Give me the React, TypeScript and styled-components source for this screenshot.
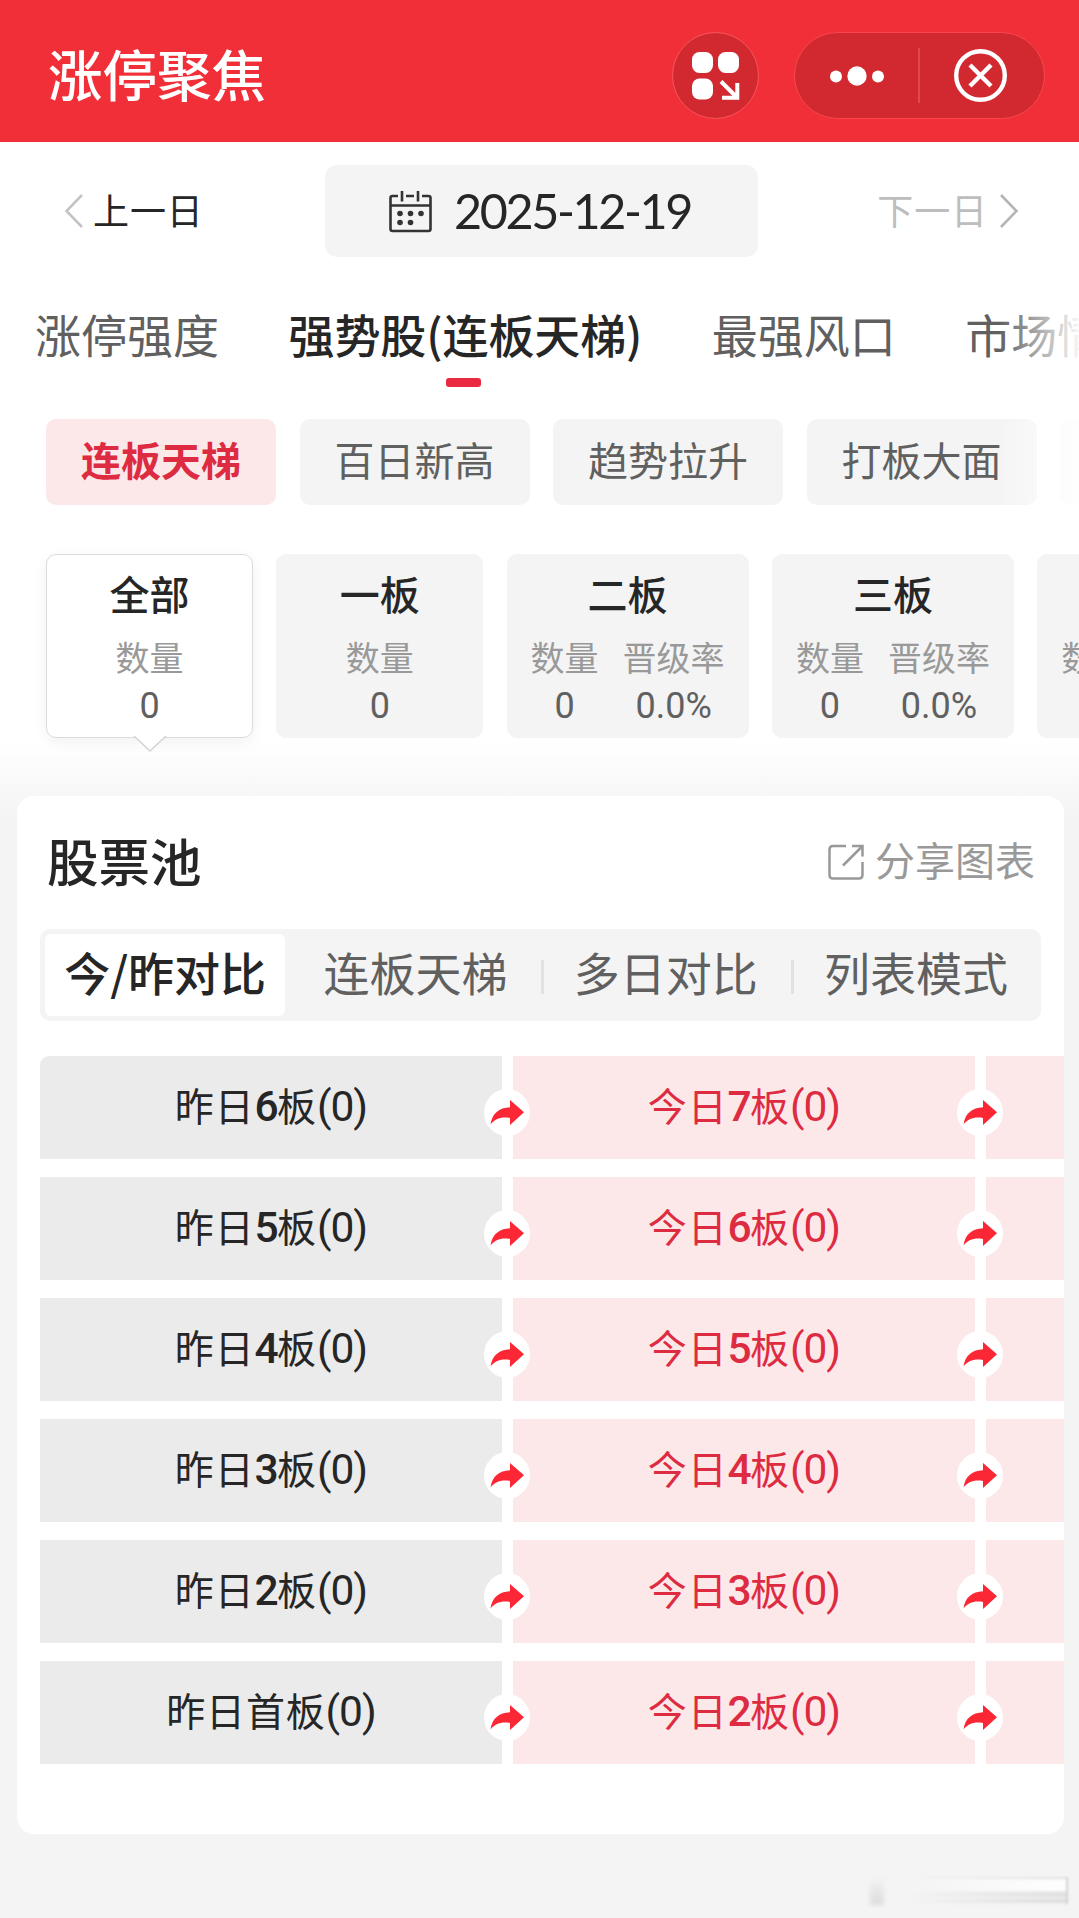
import React from "react";
import styled, { createGlobalStyle, css } from "styled-components";

const cjk = `"Noto Sans CJK SC", sans-serif`;
const numeric = `Roboto, "Noto Sans CJK SC", sans-serif`;

const GlobalStyle = createGlobalStyle`
  * { box-sizing: border-box; }
  body {
    margin: 0;
    background: #f4f4f4;
    font-family: ${cjk};
    color: #262626;
    overflow: hidden;
  }
`;

const Page = styled.div`
  position: relative;
  width: 1079px;
  height: 1918px;
  overflow: hidden;
  background: #f4f4f4;
`;

const Header = styled.header`
  height: 142px;
  padding: 0 34px 0 48px;
  background: #f12f38;
  display: flex;
  align-items: center;
`;

const AppTitle = styled.h1`
  flex: 1;
  margin: 3px 0 0;
  font-size: 54.5px;
  line-height: 80px;
  font-weight: 500;
  color: #fff;
  white-space: nowrap;
`;

const RoundButton = styled.div`
  width: 87px;
  height: 87px;
  margin: 9px 35px 0 0;
  border-radius: 44px;
  border: 1.5px solid #fa545b;
  background: #d1292f;
  display: flex;
  align-items: center;
  justify-content: center;
`;

const Capsule = styled.div`
  width: 251px;
  height: 87px;
  margin-top: 9px;
  border-radius: 44px;
  border: 1.5px solid #f9464e;
  background: #d1292f;
  display: flex;
  align-items: center;
`;

const CapsulePart = styled.div<{ $width: number }>`
  width: ${(p) => p.$width}px;
  display: flex;
  justify-content: center;
`;

const CapsuleDivider = styled.div`
  width: 1.5px;
  height: 55px;
  background: #e3474d;
`;

const Top = styled.section`
  height: 678px;
  background: linear-gradient(#fff 0, #fff 598px, #f4f4f4 678px);
`;

const DateRow = styled.div`
  display: flex;
  align-items: center;
  padding: 23px 60px 0 64px;
  height: 115px;
`;

const DayLink = styled.div<{ $muted?: boolean }>`
  width: 261px;
  flex: none;
  display: flex;
  align-items: center;
  justify-content: ${(p) => (p.$muted ? "flex-end" : "flex-start")};
  gap: ${(p) => (p.$muted ? 11 : 9)}px;
  color: ${(p) => (p.$muted ? "#bdbdbd" : "#262626")};
  font-size: 36px;
  letter-spacing: 0.9px;
  line-height: 50px;
  white-space: nowrap;
  span { margin-top: -4px; }
`;

const DateButton = styled.div`
  flex: none;
  width: 433px;
  height: 92px;
  border-radius: 12px;
  background: #f4f4f4;
  display: flex;
  align-items: center;
  padding-left: 64px;
  gap: 22px;
`;

const DateText = styled.span`
  font-family: Lato, sans-serif;
  font-size: 48.5px;
  letter-spacing: -2.4px;
  line-height: 60px;
  margin-top: -2px;
`;

const DateDash = styled.span`
  display: inline-block;
  width: 23px;
  height: 3.5px;
  margin: 0 2px 0 4px;
  vertical-align: 15px;
`;

const Strip = styled.div<{ $fade?: boolean }>`
  position: relative;
  overflow: hidden;
  display: flex;
  ${(p) =>
    p.$fade &&
    css`
      &::after {
        content: "";
        position: absolute;
        top: 0;
        right: 0;
        bottom: 0;
        width: 80px;
        background: linear-gradient(90deg, rgba(255, 255, 255, 0), rgba(255, 255, 255, 0.95));
      }
    `}
`;

const TabStrip = styled(Strip)`
  height: 130px;
  padding: 42px 0 0 35px;
  gap: 69.5px;
`;

const Tab = styled.div<{ $active?: boolean }>`
  flex: none;
  display: flex;
  flex-direction: column;
  align-items: center;
  font-size: 46px;
  line-height: 68px;
  letter-spacing: ${(p) => (p.$active ? "-0.1px" : "0")};
  white-space: nowrap;
  color: ${(p) => (p.$active ? "#262626" : "#606060")};
  font-weight: ${(p) => (p.$active ? 500 : 400)};
`;

const Underline = styled.i`
  width: 35px;
  height: 9px;
  margin: 11px 3px 0 0;
  border-radius: 3px;
  background: #e92a40;
`;

const ChipStrip = styled(Strip)`
  height: 118px;
  padding: 32px 0 0 46px;
  gap: 23.5px;
`;

const Chip = styled.div<{ $active?: boolean }>`
  flex: none;
  width: 230px;
  height: 86px;
  border-radius: 10px;
  text-align: center;
  font-size: 40px;
  line-height: 80px;
  background: ${(p) => (p.$active ? "#fde8e9" : "#f4f4f4")};
  color: ${(p) => (p.$active ? "#dd2c42" : "#606060")};
  font-weight: ${(p) => (p.$active ? 600 : 400)};
`;

const LevelStrip = styled(Strip)`
  height: 255px;
  padding: 49px 0 0 46px;
  gap: 23.3px;
`;

const Level = styled.div<{ $active?: boolean; $wide?: boolean }>`
  position: relative;
  flex: none;
  width: ${(p) => (p.$wide ? 242 : 207)}px;
  height: 184px;
  border-radius: 10px;
  background: ${(p) => (p.$active ? "#fff" : "#f4f4f4")};
  border: 1px solid ${(p) => (p.$active ? "#dcdcdc" : "#f4f4f4")};
  box-shadow: ${(p) => (p.$active ? "0 4px 14px rgba(0, 0, 0, 0.06)" : "none")};
  display: flex;
  flex-direction: column;
  align-items: center;
`;

const Pointer = styled.svg`
  position: absolute;
  left: 86px;
  top: 180px;
`;

const LevelName = styled.div`
  margin-top: 8px;
  font-size: 40px;
  line-height: 60px;
  font-weight: 500;
`;

const Metrics = styled.div`
  display: flex;
  gap: 24px;
`;

const Metric = styled.div`
  display: flex;
  flex-direction: column;
  align-items: center;
`;

const MetricLabel = styled.span`
  font-size: 34px;
  line-height: 50px;
  margin-top: 9px;
  color: #999;
  white-space: nowrap;
`;

const MetricValue = styled.span`
  font-family: ${numeric};
  font-size: 36px;
  line-height: 42px;
  margin-top: 3px;
  color: #606060;
`;

const Panel = styled.section`
  margin: -24.5px 15px 0 17px;
  height: 1038.5px;
  border-radius: 17px;
  background: #fff;
  overflow: hidden;
`;

const PanelHead = styled.div`
  display: flex;
  justify-content: space-between;
  align-items: center;
  height: 133.5px;
  padding: 0 29px 0 30px;
`;

const PanelTitle = styled.h2`
  margin: 0 0 4px;
  font-size: 51.5px;
  line-height: 76px;
  font-weight: 500;
`;

const Share = styled.div`
  display: flex;
  align-items: center;
  gap: 11px;
  color: #999;
  font-size: 40px;
  line-height: 60px;
  span { margin-top: -7px; }
`;

const Segments = styled.div`
  margin: 0 23px;
  height: 92px;
  border-radius: 10px;
  background: #f4f4f4;
  display: grid;
  grid-template-columns: repeat(4, 1fr);
  align-items: center;
`;

const Segment = styled.div<{ $active?: boolean }>`
  height: 82px;
  margin: 0 ${(p) => (p.$active ? 5 : 0)}px;
  border-radius: 6px;
  display: flex;
  align-items: center;
  justify-content: center;
  padding-bottom: 8px;
  font-size: 46px;
  line-height: 68px;
  white-space: nowrap;
  background: ${(p) => (p.$active ? "#fff" : "transparent")};
  color: ${(p) => (p.$active ? "#262626" : "#606060")};
  font-weight: ${(p) => (p.$active ? 500 : 400)};
  position: relative;
`;

const SegmentRule = styled.i`
  position: absolute;
  left: 0;
  top: 26px;
  width: 3px;
  height: 34px;
  background: #e2e2e2;
`;

const Ladder = styled.div`
  margin: 35px 0 0 23px;
  display: grid;
  row-gap: 18px;
`;

const LadderRow = styled.div`
  display: grid;
  grid-template-columns: 462px 462px 462px;
  column-gap: 11px;
  height: 103px;
  &:first-child > :first-child { border-top-left-radius: 9px; }
`;

const Cell = styled.div<{ $today?: boolean }>`
  position: relative;
  display: flex;
  align-items: center;
  justify-content: center;
  padding-bottom: 5px;
  font-size: 39px;
  letter-spacing: 0.8px;
  line-height: 60px;
  white-space: nowrap;
  background: ${(p) => (p.$today ? "#fde8e9" : "#ebebeb")};
  color: ${(p) => (p.$today ? "#dd2c42" : "#262626")};
`;

const Num = styled.span<{ $light?: boolean }>`
  font-family: ${numeric};
  font-size: 42.5px;
  font-weight: ${(p) => (p.$light ? 400 : 500)};
  letter-spacing: ${(p) => (p.$light ? "-1px" : "-1.5px")};
`;

const Jump = styled.div`
  position: absolute;
  z-index: 1;
  right: -28px;
  top: 33px;
  width: 46px;
  height: 47px;
  border-radius: 50%;
  background: #fff;
  display: flex;
  align-items: center;
  justify-content: center;
`;

const Watermark = styled.div`
  position: absolute;
  right: 11px;
  bottom: 11px;
  width: 198px;
  height: 30px;
  display: flex;
  gap: 8px;
`;

const Smudge = styled.i`
  width: 14px;
  height: 28px;
  background: linear-gradient(rgba(220, 220, 220, 0), #dcdcdc);
  filter: blur(2px);
`;

const SmudgeBar = styled.i`
  flex: 1;
  height: 27px;
  border-right: 2px solid #d4d4d4;
  background:
    linear-gradient(90deg, #f4f4f4 10%, rgba(244, 244, 244, 0.1) 100%),
    linear-gradient(#dedede 0 1px, #fff 3px 13px, #ddd 16px 19px, #eee 21px, #d2d2d2 24px, #f4f4f4 27px);
  filter: blur(0.8px);
`;

const Chevron = ({ right }: { right?: boolean }) => (
  <svg width="20" height="36" viewBox="0 0 20 36" fill="none" stroke={right ? "#b5b5b5" : "#c4c4c4"} strokeWidth="2.6">
    <path d={right ? "M2 2 17.5 18 2 34" : "M18 2 2.5 18 18 34"} />
  </svg>
);

const GridIcon = () => (
  <svg width="48" height="48" viewBox="0 0 48 48" fill="#fff">
    <rect x="0" y="0" width="21" height="21" rx="7.5" />
    <rect x="26" y="0" width="21" height="21" rx="7.5" />
    <rect x="0" y="26.5" width="21" height="21" rx="7.5" />
    <path d="M29 29.5 45 45.5M45.3 31v14.8H30" fill="none" stroke="#fff" strokeWidth="4" />
  </svg>
);

const DotsIcon = () => (
  <svg width="56" height="20" viewBox="0 0 56 20" fill="#fff">
    <circle cx="7" cy="10.5" r="6" />
    <circle cx="28" cy="10" r="9.7" />
    <circle cx="49" cy="10.5" r="6" />
  </svg>
);

const CloseIcon = () => (
  <svg width="54" height="54" viewBox="0 0 54 54" fill="none" stroke="#fff">
    <circle cx="27.5" cy="26.5" r="24.3" strokeWidth="4.4" />
    <path d="M17 16 38 37M38 16 17 37" strokeWidth="4.4" />
  </svg>
);

const CalendarIcon = () => (
  <svg width="43" height="43" viewBox="0 0 43 43" fill="none" stroke="#333" strokeWidth="2.6">
    <path d="M9 6H3.5Q1.5 6 1.5 8V39q0 2 2 2h36q2 0 2-2V8q0-2-2-2H33M17 6h8M1.5 15.5h40M13 1v10.500M29 1v10.500" />
    <g fill="#333" stroke="none">
      <circle cx="11" cy="23.500" r="2.800" />
      <circle cx="21.500" cy="23.500" r="2.800" />
      <circle cx="32" cy="23.500" r="2.800" />
      <circle cx="11" cy="32.500" r="2.800" />
      <circle cx="21.500" cy="32.500" r="2.800" />
    </g>
  </svg>
);

const ShareIcon = () => (
  <svg width="36" height="36" viewBox="0 0 36 36" fill="none" stroke="#999" strokeWidth="2.5">
    <path d="M18 2H5Q1.500 2 1.500 5.500V31q0 3.500 3.500 3.500H31q3.500 0 3.500-3.500V18M24 2h10.500v10.500M34 2.500 15 21.500" />
  </svg>
);

const JumpArrow = () => (
  <svg width="34" height="26" viewBox="0 0 34 26" fill="#fb2735">
    <path d="M20 0 34 12.300 20 25V18C11 16.500 5 19 .500 24.500 2 13.500 9 7.500 20 7.200Z" />
  </svg>
);

const levels = [
  { name: "全部", active: true },
  { name: "一板" },
  { name: "二板", rate: "0.0%" },
  { name: "三板", rate: "0.0%" },
  { name: "四板", rate: "0.0%" },
];

const rows = [
  ["6", "7"],
  ["5", "6"],
  ["4", "5"],
  ["3", "4"],
  ["2", "3"],
  ["首", "2"],
];

const Count = ({ day, level }: { day: string; level: string }) => (
  <span>
    {day}
    {level === "首" ? level : <Num>{level}</Num>}板<Num $light>(0)</Num>
  </span>
);

export default function App() {
  return (
    <Page>
      <GlobalStyle />
      <Header>
        <AppTitle>涨停聚焦</AppTitle>
        <RoundButton>
          <GridIcon />
        </RoundButton>
        <Capsule>
          <CapsulePart $width={123}>
            <DotsIcon />
          </CapsulePart>
          <CapsuleDivider />
          <CapsulePart $width={121}>
            <CloseIcon />
          </CapsulePart>
        </Capsule>
      </Header>

      <Top>
        <DateRow>
          <DayLink>
            <Chevron />
            <span>上一日</span>
          </DayLink>
          <DateButton>
            <CalendarIcon />
            <DateText>2025-12-19</DateText>
          </DateButton>
          <DayLink $muted>
            <span>下一日</span>
            <Chevron right />
          </DayLink>
        </DateRow>

        <TabStrip $fade>
          <Tab>涨停强度</Tab>
          <Tab $active>
            强势股(连板天梯)
            <Underline />
          </Tab>
          <Tab>最强风口</Tab>
          <Tab>市场情绪</Tab>
        </TabStrip>

        <ChipStrip $fade>
          <Chip $active>连板天梯</Chip>
          <Chip>百日新高</Chip>
          <Chip>趋势拉升</Chip>
          <Chip>打板大面</Chip>
          <Chip />
        </ChipStrip>

        <LevelStrip>
          {levels.map((l) => (
            <Level key={l.name} $active={l.active} $wide={!!l.rate}>
              <LevelName>{l.name}</LevelName>
              <Metrics>
                <Metric>
                  <MetricLabel>数量</MetricLabel>
                  <MetricValue>0</MetricValue>
                </Metric>
                {l.rate && (
                  <Metric>
                    <MetricLabel>晋级率</MetricLabel>
                    <MetricValue>{l.rate}</MetricValue>
                  </Metric>
                )}
              </Metrics>
              {l.active && (
                <Pointer width="34" height="18" viewBox="0 0 34 18">
                  <path d="M1 1 17 16 33 1" fill="#fff" stroke="#d4d4d4" strokeWidth="1.500" />
                </Pointer>
              )}
            </Level>
          ))}
        </LevelStrip>
      </Top>

      <Panel>
        <PanelHead>
          <PanelTitle>股票池</PanelTitle>
          <Share>
            <ShareIcon />
            <span>分享图表</span>
          </Share>
        </PanelHead>
        <Segments>
          <Segment $active>今/昨对比</Segment>
          <Segment>连板天梯</Segment>
          <Segment>
            <SegmentRule />
            多日对比
          </Segment>
          <Segment>
            <SegmentRule />
            列表模式
          </Segment>
        </Segments>
        <Ladder>
          {rows.map(([before, now]) => (
            <LadderRow key={before}>
              <Cell>
                <Count day="昨日" level={before} />
                <Jump>
                  <JumpArrow />
                </Jump>
              </Cell>
              <Cell $today>
                <Count day="今日" level={now} />
                <Jump>
                  <JumpArrow />
                </Jump>
              </Cell>
              <Cell $today />
            </LadderRow>
          ))}
        </Ladder>
      </Panel>

      <Watermark>
        <Smudge />
        <SmudgeBar />
      </Watermark>
    </Page>
  );
}
